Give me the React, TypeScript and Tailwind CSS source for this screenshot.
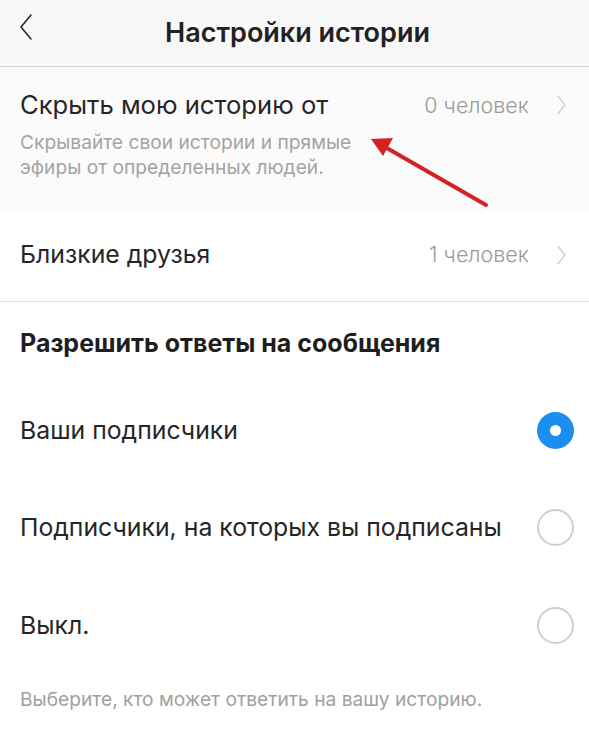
function Chevron({ dir, className }: { dir: "left" | "right"; className?: string }) {
  return (
    <svg className={className} viewBox="0 0 14 28" fill="none" stroke="currentColor" strokeWidth="1.6" strokeLinecap="round" strokeLinejoin="round">
      {dir === "left" ? <path d="M12 2 L2 14 L12 26" /> : <path d="M2 2 L12 14 L2 26" />}
    </svg>
  );
}

function Radio({ checked }: { checked?: boolean }) {
  return checked ? (
    <div className="w-[37px] h-[37px] rounded-full bg-[#1c8ef0] flex items-center justify-center">
      <div className="w-[11px] h-[11px] rounded-full bg-white" />
    </div>
  ) : (
    <div className="w-[37px] h-[37px] rounded-full border-2 border-[#cfcfcf]" />
  );
}

export default function App() {
  return (
    <div className="relative w-[589px] h-[732px] bg-white text-[#262626] overflow-hidden font-['Inter',sans-serif]">
      {/* Header */}
      <header className="h-[67px] bg-[#f8f8f8] border-b border-[#d6d6d6] flex items-center relative">
        <Chevron dir="left" className="absolute left-[18px] top-[13px] w-[16px] h-[28px] text-[#2a2a2a]" />
        <h1 className="w-full text-center text-[27px] font-semibold pl-[6px] text-[#222]">Настройки истории</h1>
      </header>

      {/* Hide story */}
      <section className="bg-[#fbfbfb] h-[147px] pl-5 pr-[22px] pt-[19px]">
        <div className="flex items-center justify-between">
          <span className="text-[25.6px]">Скрыть мою историю от</span>
          <div className="flex items-center gap-[27px] text-[#9a9a9a]">
            <span className="text-[21.5px] font-light">0 человек</span>
            <Chevron dir="right" className="w-[11px] h-[20px] text-[#c2c2c2]" />
          </div>
        </div>
        <p className="mt-[6px] text-[19.2px] leading-[25px] text-[#a3a3a3]">
          Скрывайте свои истории и прямые
          <br />
          эфиры от определенных людей.
        </p>
      </section>

      {/* Close friends */}
      <section className="h-[88px] pl-5 pr-[22px] flex items-center justify-between border-b border-[#e2e2e2]">
        <span className="text-[24.8px] -mt-[6px]">Близкие друзья</span>
        <div className="flex items-center gap-[27px] text-[#9a9a9a] -mt-[6px]">
          <span className="text-[21.5px] font-light">1 человек</span>
          <Chevron dir="right" className="w-[11px] h-[20px] text-[#c2c2c2]" />
        </div>
      </section>

      {/* Replies */}
      <section className="pl-5 pr-[15px]">
        <h2 className="pt-[23px] text-[25px] font-bold text-[#1e1e1e]">Разрешить ответы на сообщения</h2>
        <div className="mt-[48px] flex items-center justify-between h-[40px]">
          <span className="text-[24.8px]">Ваши подписчики</span>
          <Radio checked />
        </div>
        <div className="mt-[57px] flex items-center justify-between h-[40px]">
          <span className="text-[24.8px]">Подписчики, на которых вы подписаны</span>
          <Radio />
        </div>
        <div className="mt-[58px] flex items-center justify-between h-[40px]">
          <span className="text-[24.8px]">Выкл.</span>
          <Radio />
        </div>
        <p className="mt-[39px] text-[19.2px] text-[#a0a0a0]">Выберите, кто может ответить на вашу историю.</p>
      </section>

      {/* Annotation arrow */}
      <svg className="absolute left-0 top-0 pointer-events-none" width="589" height="732">
        <line x1="486" y1="205" x2="385" y2="147" stroke="#d42222" strokeWidth="4" strokeLinecap="round" />
        <polygon points="371,139 393,138 383,156" fill="#d42222" />
      </svg>
    </div>
  );
}
